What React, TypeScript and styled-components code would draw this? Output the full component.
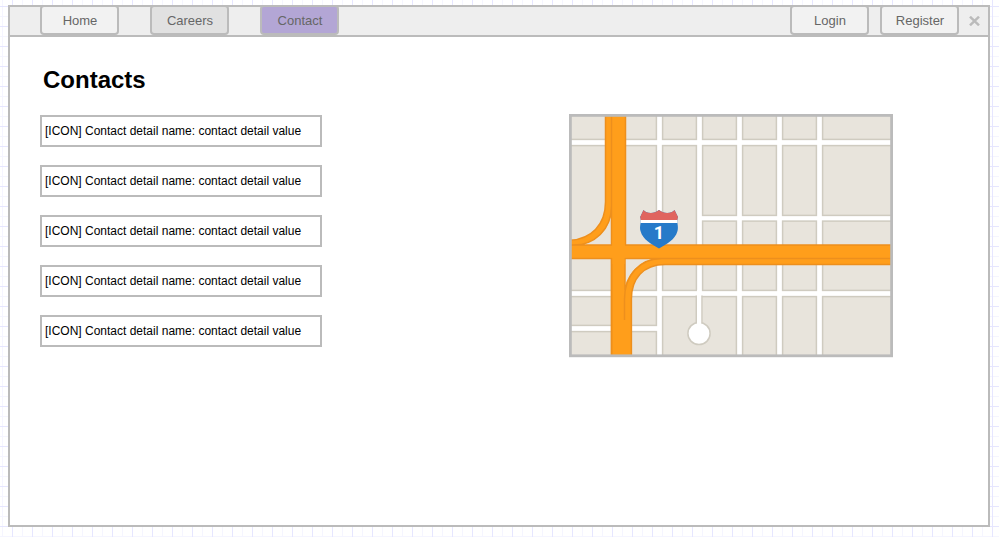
import React from "react";
import styled, { createGlobalStyle } from "styled-components";

const GlobalStyle = createGlobalStyle`
  * { box-sizing: border-box; }
  html, body { margin: 0; padding: 0; }
  body {
    height: 537px;
    overflow: hidden;
    font-family: "Liberation Sans", Arial, sans-serif;
  }
`;

const Canvas = styled.div`
  width: 999px;
  height: 537px;
  padding: 5px 9px 10px 8px;
  background-color: #fff;
  background-image:
    linear-gradient(to right, #e6e6ff 1px, transparent 1px),
    linear-gradient(to bottom, #e6e6ff 1px, transparent 1px),
    linear-gradient(to right, #f5f5ff 1px, transparent 1px),
    linear-gradient(to bottom, #f5f5ff 1px, transparent 1px);
  background-size: 20px 20px;
  background-position: 12px 0, 0 6px, 2px 0, 0 16px;
`;

const Window = styled.main`
  height: 522px;
  border: 2px solid #bbb;
  background: #fff;
`;

const Bar = styled.header`
  display: flex;
  justify-content: space-between;
  height: 30px;
  padding-left: 30px;
  background: #eee;
  border-bottom: 2px solid #bbb;
`;

const Group = styled.nav<{ $gap: number }>`
  display: flex;
  gap: ${(p) => p.$gap}px;
  margin-top: -2px;
`;

const Actions = styled.div`
  display: flex;
`;

const Tab = styled.button<{ $fill: string }>`
  width: 79px;
  height: 30px;
  padding: 1px 0 0 1px;
  border: 2px solid #bbb;
  border-radius: 4px;
  background: ${(p) => p.$fill};
  color: #666;
  font: 13px/25px "Liberation Sans", Arial, sans-serif;
  text-align: center;
`;

const Close = styled.button`
  display: flex;
  align-items: flex-start;
  width: 29px;
  height: 28px;
  padding: 9px 0 0 10px;
  border: 0;
  background: none;
`;

const Body = styled.section`
  display: grid;
  grid-template-columns: 528px 325px;
  padding: 29px 0 0 31px;
`;

const Title = styled.h1`
  grid-column: 1 / -1;
  margin: 0 0 21px 2px;
  font-size: 24px;
  line-height: 28px;
  font-weight: bold;
`;

const Details = styled.ul`
  display: flex;
  flex-direction: column;
  gap: 18px;
  margin: 0;
  padding: 0;
  list-style: none;
`;

const Detail = styled.li`
  width: 282px;
  height: 32px;
  margin-left: -1px;
  padding-left: 3px;
  border: 2px solid #bbb;
  font-size: 12px;
  line-height: 28px;
  white-space: nowrap;
`;

const MapDrawing = styled.svg`
  display: block;
  margin-top: -1px;
`;

/* Each block is left, top, right, bottom. */
const blocks: number[][] = [
  [566, 110, 657, 140],
  [566, 145, 657, 291],
  [566, 296, 657, 326],
  [566, 331, 657, 360],
  [662, 110, 697, 140],
  [662, 145, 697, 291],
  [662, 296, 737, 360],
  ...[[702, 737], [742, 777], [782, 817], [822, 896]].flatMap(([l, r]) => [
    [l, 110, r, 140],
    [l, 145, r, 216],
    [l, 220.5, r, 291],
  ]),
  [742, 296, 777, 360],
  [782, 296, 817, 360],
  [822, 296, 896, 360],
];

const CityMap = () => (
  <MapDrawing width="325" height="244" viewBox="569 114 325 244" role="img" aria-label="Map">
    <clipPath id="mapArea">
      <rect x="570" y="115" width="322" height="241" />
    </clipPath>
    <g clipPath="url(#mapArea)">
      <rect x="570" y="115" width="322" height="241" fill="#fff" />
      <g fill="#e8e4dc" stroke="#cfcbc0" strokeWidth="1.5">
        {blocks.map(([l, t, r, b], i) => (
          <rect key={i} x={l + 0.6} y={t + 0.6} width={r - l - 1.2} height={b - t - 1.2} />
        ))}
      </g>
      <circle cx="699" cy="333.5" r="11.1" fill="#fff" stroke="#cfcbc0" strokeWidth="1.5" />
      <path d="M696.3 295.5V323M701.9 295.5V323" stroke="#cfcbc0" strokeWidth="1.5" />
      <path d="M697 290h4.2v36h-4.2z" fill="#fff" />
      <path
        d="M605.5 110H625.5V245H895V264.5H665C643 264.5 631.4 279 631.4 299V360H611.6V258.5H566V240.5C592 240.5 605.5 224 605.5 202Z"
        fill="#ff9e1b" stroke="#ed8f1d" strokeWidth="1.5"
      />
      <path
        d="M611.5 210C610 229 598 240 582 245H611.5ZM625 258.5H655C640 261 629 272 625 286Z"
        fill="#e8e4dc"
      />
      <path
        d="M566 245H611.5V110M611.5 206C611.5 230 594 245 574 245M611.5 258.5V360M625 290V258.5H895M624.5 320V299C624.5 275 640 258.5 662 258.5"
        fill="none" stroke="#ed8f1d" strokeWidth="1.5"
      />
      <path d="M610 246H627V257.6H610ZM612.4 240H624.6V264H612.4Z" fill="#ff9e1b" />
    </g>
    <path
      d="M643.5 210C646 213.5 654 214.5 659 210C664 214.5 672 213.5 674.5 210L678 217C676 221 679 226 677.5 231C675 240 667 243.5 659 248.5C651 243.5 643 240 640.5 231C639 226 642 221 640.2 217Z"
      fill="#267ac9"
    />
    <path d="M643.5 210C646 213.5 654 214.5 659 210C664 214.5 672 213.5 674.5 210L678 217L677.2 220H640.8L640.2 217Z" fill="#e0645f" />
    <path d="M640.8 220H677.2L677.5 223H640.5Z" fill="#fff" />
    <text x="659" y="239" fill="#fff" fontFamily="Roboto, sans-serif" fontSize="18" fontWeight="bold" textAnchor="middle">
      1
    </text>
    <rect x="570.4" y="115.4" width="321.2" height="240.4" fill="none" stroke="#bbb" strokeWidth="2.8" />
  </MapDrawing>
);

const details = Array.from({ length: 5 }, () => "[ICON] Contact detail name: contact detail value");

export default function App() {
  return (
    <>
      <GlobalStyle />
      <Canvas>
        <Window>
          <Bar>
            <Group $gap={31}>
              <Tab $fill="#f2f2f2">Home</Tab>
              <Tab $fill="#e1e1e1">Careers</Tab>
              <Tab $fill="#b3a6d5">Contact</Tab>
            </Group>
            <Actions>
              <Group $gap={11}>
                <Tab $fill="#f2f2f2">Login</Tab>
                <Tab $fill="#f2f2f2">Register</Tab>
              </Group>
              <Close aria-label="Close">
                <svg width="11" height="10" viewBox="0 0 11 10">
                  <path d="M1 .7L10 9.3M10 .7L1 9.3" stroke="#bbb" strokeWidth="2.5" />
                </svg>
              </Close>
            </Actions>
          </Bar>
          <Body>
            <Title>Contacts</Title>
            <Details>
              {details.map((label, i) => (
                <Detail key={i}>{label}</Detail>
              ))}
            </Details>
            <CityMap />
          </Body>
        </Window>
      </Canvas>
    </>
  );
}
